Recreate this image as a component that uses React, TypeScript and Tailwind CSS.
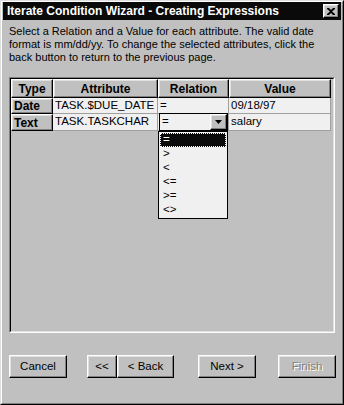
import React from "react";

const font = { fontFamily: '"Liberation Sans", Arial, sans-serif' };

const raised =
  "border border-t-white border-l-white border-r-black border-b-black shadow-[inset_-1px_-1px_#808080,inset_1px_1px_#dfdfdf]";

function Btn({ children, w, disabled }: { children: React.ReactNode; w: string; disabled?: boolean }) {
  return (
    <div className={`${w} h-[23px] bg-[#c0c0c0] ${raised} flex items-center justify-center text-[11.5px]`}>
      {disabled ? (
        <span className="text-[#808080] [text-shadow:1px_1px_0_#ffffff]">{children}</span>
      ) : (
        <span className="text-black">{children}</span>
      )}
    </div>
  );
}

function HeadCell({ children, w }: { children: React.ReactNode; w: string }) {
  return (
    <div className={`${w} h-[19px] bg-[#c0c0c0] ${raised} flex items-center justify-center font-bold text-[12px] text-black`}>
      {children}
    </div>
  );
}

function DataCell({ children, w }: { children?: React.ReactNode; w: string }) {
  return (
    <div className={`${w} h-full bg-[#f0f0f0] border-r border-b border-[#a0a0a0] flex items-center pl-[2px] text-[11.5px] text-black`}>
      {children}
    </div>
  );
}

function RowHead({ children }: { children: React.ReactNode }) {
  return (
    <div className={`w-[42px] h-full bg-[#c0c0c0] ${raised} flex items-center pl-[2px] font-bold text-[12px] text-black`}>
      {children}
    </div>
  );
}

export default function App() {
  const items = ["=", ">", "<", "<=", ">=", "<>"];
  return (
    <div style={font} className="w-[344px] h-[405px] bg-[#c0c0c0] border border-t-[#dfdfdf] border-l-[#dfdfdf] border-r-black border-b-black">
      <div className="w-full h-full border border-t-white border-l-white border-r-[#808080] border-b-[#808080] px-[1px] pb-[1px] flex flex-col relative">
        {/* Title bar */}
        <div className="h-[18px] bg-[#0a0a0a] flex items-center justify-between pl-[4px] pr-[2px]">
          <span className="text-white font-bold text-[12px]">Iterate Condition Wizard - Creating Expressions</span>
          <div className={`w-[16px] h-[14px] bg-[#c0c0c0] ${raised} flex items-center justify-center`}>
            <svg width="8" height="7" viewBox="0 0 8 7">
              <path d="M0 0h2l2 2 2-2h2v1L5 3.5 8 6v1H6L4 5 2 7H0V6l3-2.5L0 1z" fill="#000" />
            </svg>
          </div>
        </div>

        {/* Description */}
        <div className="px-[6px] pt-[5px] text-[11px] leading-[13px] text-black">
          Select a Relation and a Value for each attribute. The valid date format is mm/dd/yy. To change the selected attributes, click the back button to return to the previous page.
        </div>

        {/* Table frame */}
        <div className="mt-[13px] ml-[6px] w-[326px] h-[256px] border border-t-[#808080] border-l-[#808080] border-r-white border-b-white">
          <div className="w-full h-full border border-t-black border-l-black border-r-[#dfdfdf] border-b-[#dfdfdf] bg-[#c0c0c0] flex flex-col">
            <div className="flex">
              <HeadCell w="w-[42px]">Type</HeadCell>
              <HeadCell w="w-[105px]">Attribute</HeadCell>
              <HeadCell w="w-[71px]">Relation</HeadCell>
              <HeadCell w="w-[102px]">Value</HeadCell>
            </div>
            <div className="flex h-[16px]">
              <RowHead>Date</RowHead>
              <DataCell w="w-[105px]">TASK.$DUE_DATE</DataCell>
              <DataCell w="w-[71px]">=</DataCell>
              <DataCell w="w-[102px]">09/18/97</DataCell>
            </div>
            <div className="flex h-[17px]">
              <RowHead>Text</RowHead>
              <DataCell w="w-[105px]">TASK.TASKCHAR</DataCell>
              <div className="w-[71px] h-full bg-[#f0f0f0] border-r border-b border-[#a0a0a0] relative">
                <div className="absolute left-[1px] top-[-1px] w-[69px] h-[18px] border border-black bg-[#f0f0f0] flex items-center">
                  <span className="pl-[2px] text-[11.5px] flex-1">=</span>
                  <div className={`w-[17px] h-[16px] bg-[#c0c0c0] ${raised} flex items-center justify-center`}>
                    <svg width="7" height="4" viewBox="0 0 7 4">
                      <path d="M0 0h7L3.5 4z" fill="#000" />
                    </svg>
                  </div>
                </div>
                {/* Dropdown list */}
                <div className="absolute left-[0px] top-[17px] w-[70px] h-[88px] border border-black bg-[#f0f0f0] z-10 flex flex-col pt-[1px]">
                  {items.map((it, i) =>
                    i === 0 ? (
                      <div key={it} className="mx-[1px] h-[14px] bg-[#0a0a0a] border border-dotted border-white flex items-center pl-[2px] text-white text-[11.5px]">
                        {it}
                      </div>
                    ) : (
                      <div key={it} className="mx-[1px] h-[14px] flex items-center pl-[3px] text-black text-[11.5px]">
                        {it}
                      </div>
                    )
                  )}
                </div>
              </div>
              <DataCell w="w-[102px]">salary</DataCell>
            </div>
          </div>
        </div>

        {/* Buttons */}
        <div className="mt-[22px] ml-[6px] flex">
          <Btn w="w-[58px]">Cancel</Btn>
          <div className="ml-[20px] flex">
            <Btn w="w-[30px]">&lt;&lt;</Btn>
            <Btn w="w-[57px]">&lt; Back</Btn>
          </div>
          <div className="ml-[24px]">
            <Btn w="w-[58px]">Next &gt;</Btn>
          </div>
          <div className="ml-[22px]">
            <Btn w="w-[58px]" disabled>Finish</Btn>
          </div>
        </div>
      </div>
    </div>
  );
}
